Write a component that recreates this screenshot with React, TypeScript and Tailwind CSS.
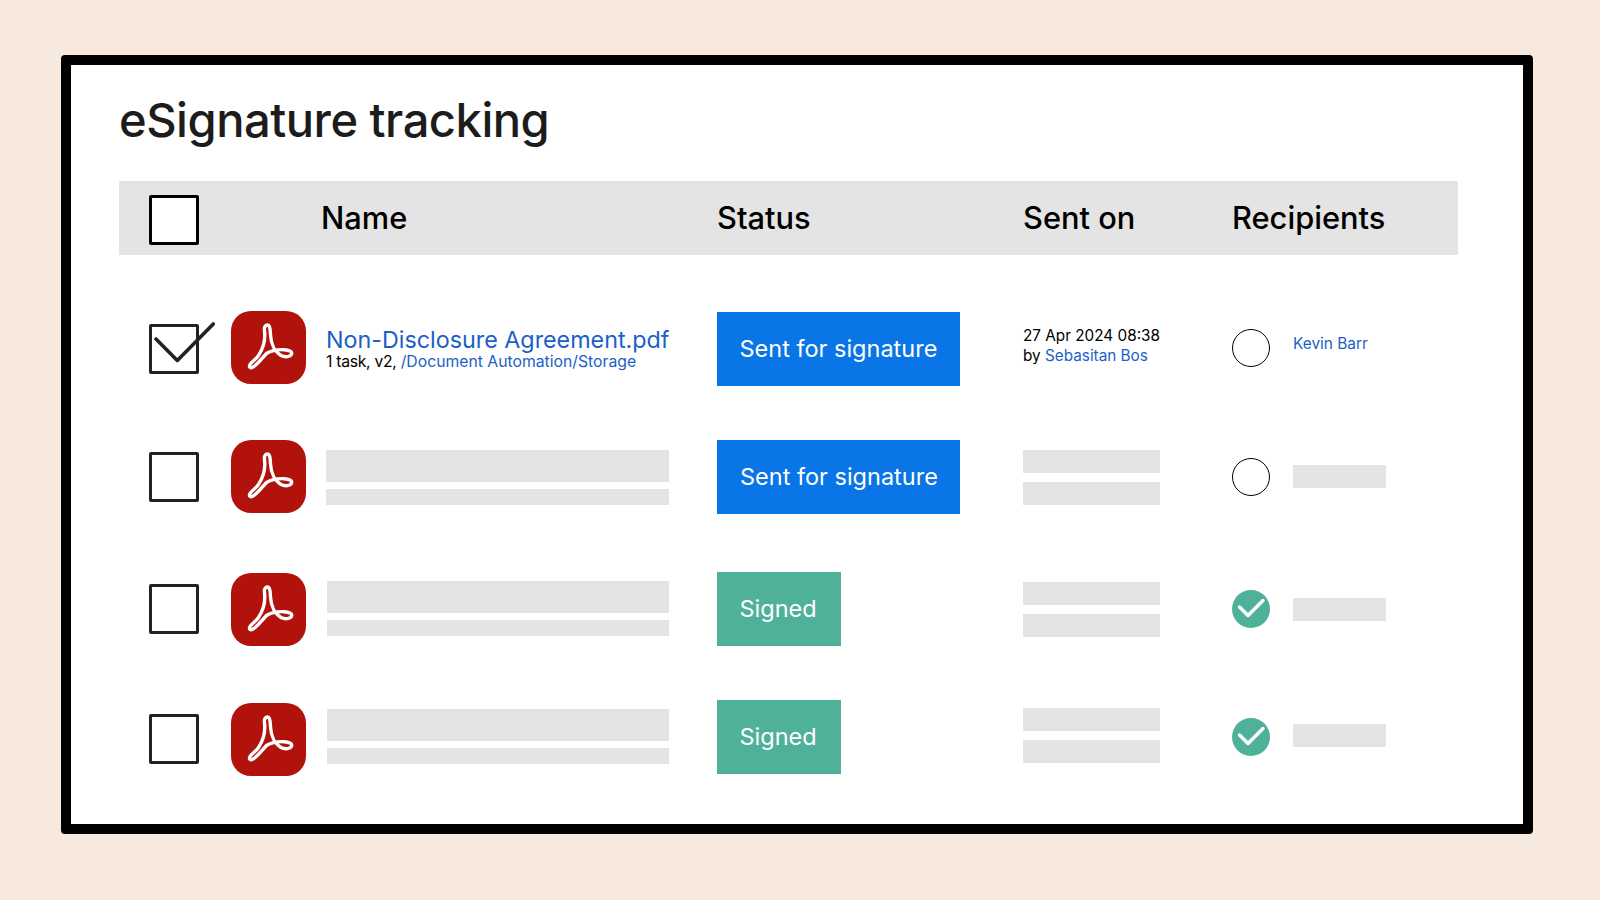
const pageFont = "font-['Inter','Liberation_Sans',sans-serif]";

function Checkbox({ className = "" }: { className?: string }) {
  return (
    <div
      className={`h-[50px] w-[50px] rounded-[2px] border-[3px] border-[#222222] bg-white ${className}`}
    />
  );
}

function CheckedBox() {
  return (
    <div className="relative mt-[2px] h-[50px] w-[50px] rounded-[2px] border-[3px] border-[#222222] bg-white">
      <svg
        className="absolute top-[-17px] left-[-3px] overflow-visible"
        width="70"
        height="70"
        viewBox="0 0 70 70"
        fill="none"
      >
        <path
          d="M7 29 L28.300 50.500 L64.300 14"
          stroke="#222222"
          strokeWidth="3.600"
          strokeLinecap="round"
          strokeLinejoin="round"
        />
      </svg>
    </div>
  );
}

function PdfIcon({ className = "" }: { className?: string }) {
  return (
    <div className={`h-[73px] w-[75px] shrink-0 rounded-[20px] bg-[#b1120b] ${className}`}>
      <svg width="75" height="73" viewBox="0 0 75 73" fill="none">
        <path
          d="M36.300 14C34 14 33 16.500 33.500 20C34.500 28 32.500 37 27.500 44.500C24.500 49 21 50 19 53.500C17.500 56.500 19.500 57.500 22 56C27 53 31 47 35.500 42.500C39.500 40 47 38.500 53 38.700C58 39 61.500 40.500 60.500 43C59.500 46 54 46.500 50 44.500C44 41 40 33 39.500 24C39.300 18 38.800 14 36.300 14Z"
          stroke="white"
          strokeWidth="3.400"
          strokeLinejoin="round"
        />
      </svg>
    </div>
  );
}

function Badge({
  label,
  tone,
  className = "",
}: {
  label: string;
  tone: "sent" | "signed";
  className?: string;
}) {
  return (
    <div
      className={`flex h-[74px] items-center text-[23.5px] text-white ${
        tone === "sent" ? "w-[243px] bg-[#0a75e6]" : "w-[124px] bg-[#4fb19a]"
      } ${className}`}
    >
      {label}
    </div>
  );
}

function EmptyCircle() {
  return <div className="h-[38px] w-[38px] shrink-0 rounded-full border-[1.5px] border-black" />;
}

function DoneCircle() {
  return (
    <div className="h-[38px] w-[38px] shrink-0 rounded-full bg-[#4fb19a]">
      <svg width="38" height="38" viewBox="0 0 38 38" fill="none">
        <path
          d="M7.500 17 L16 25.500 L31 10.500"
          stroke="white"
          strokeWidth="3.400"
          strokeLinecap="round"
          strokeLinejoin="round"
        />
      </svg>
    </div>
  );
}

function Bar({ className }: { className: string }) {
  return <div className={`bg-[#e4e4e4] ${className}`} />;
}

type RowProps = {
  height: string;
  name: React.ReactNode;
  badge: React.ReactNode;
  sent: React.ReactNode;
  recipient: React.ReactNode;
  check?: React.ReactNode;
  iconClass?: string;
};

function Row({ height, name, badge, sent, recipient, check, iconClass }: RowProps) {
  return (
    <div
      className={`grid grid-cols-[82px_95px_391px_306px_209px_1fr] items-center pl-[30px] ${height}`}
    >
      {check ?? <Checkbox />}
      <PdfIcon className={iconClass} />
      {name}
      {badge}
      {sent}
      {recipient}
    </div>
  );
}

function NameBars({ className = "" }: { className?: string }) {
  return (
    <div className={`flex flex-col gap-[7px] ${className}`}>
      <Bar className="h-[32px]" />
      <Bar className="h-[16px]" />
    </div>
  );
}

function SentBars({ className = "" }: { className?: string }) {
  return (
    <div className={`flex w-[137px] flex-col gap-[9px] ${className}`}>
      <Bar className="h-[23px]" />
      <Bar className="h-[23px]" />
    </div>
  );
}

function Recipient({
  icon,
  className = "",
  barClass = "",
}: {
  icon: React.ReactNode;
  className?: string;
  barClass?: string;
}) {
  return (
    <div className={`flex items-center gap-[23px] ${className}`}>
      {icon}
      <Bar className={`h-[23px] w-[93px] ${barClass}`} />
    </div>
  );
}

export default function App() {
  return (
    <div className={`h-[900px] w-[1600px] bg-[#f7e9dd] pt-[55px] pl-[61px] ${pageFont}`}>
      <div className="h-[779px] w-[1472px] rounded-[4px] border-[10px] border-black bg-white pt-[23px] pl-[48px]">
        <h1 className="text-[47.100px] leading-[64px] font-medium tracking-[-0.5px] text-[#1c1c1c]">
          eSignature tracking
        </h1>
        <div className="mt-[29px] w-[1339px]">
          <div className="grid h-[74px] grid-cols-[172px_396px_306px_209px_1fr] items-center bg-[#e4e4e4] pl-[30px] text-[30.8px] font-medium text-black">
            <Checkbox className="mt-[4px] border-black" />
            <span className="mt-[1px]">Name</span>
            <span className="mt-[1px]">Status</span>
            <span className="mt-[1px]">Sent on</span>
            <span className="mt-[1px]">Recipients</span>
          </div>
          <div className="mt-[36px]">
            <Row
              height="h-[113px]"
              check={<CheckedBox />}
              name={
                <div className="mt-[3px] flex flex-col text-[#1c5fc5]">
                  <span className="text-[23.3px] leading-[24px]">Non-Disclosure Agreement.pdf</span>
                  <span className="mt-[1px] text-[15.750px] leading-[18px]">
                    <span className="tracking-[-0.3px] text-black">1 task, v2, </span>
                    /Document Automation/Storage
                  </span>
                </div>
              }
              badge={<Badge label="Sent for signature" tone="sent" className="mt-[2px] pl-[22.500px]" />}
              sent={
                <div className="-mt-[3px] text-[15.300px] leading-[20px] text-black">
                  <div>27 Apr 2024 08:38</div>
                  <div>
                    by <span className="text-[#1c5fc5]">Sebasitan Bos</span>
                  </div>
                </div>
              }
              recipient={
                <div className="flex items-center gap-[23px]">
                  <EmptyCircle />
                  <span className="-mt-[8px] text-[15.400px] text-[#1c5fc5]">Kevin Barr</span>
                </div>
              }
            />
            <Row
              height="h-[145px]"
              name={<NameBars className="mt-[2px] w-[343px]" />}
              badge={<Badge label="Sent for signature" tone="sent" className="pl-[23px]" />}
              sent={<SentBars className="mt-[2px]" />}
              recipient={<Recipient icon={<EmptyCircle />} />}
            />
            <Row
              height="h-[119px]"
              iconClass="mt-[2px]"
              name={<NameBars className="ml-[1px] w-[342px]" />}
              badge={<Badge label="Signed" tone="signed" className="pl-[22.500px]" />}
              sent={<SentBars className="mt-[2px]" />}
              recipient={<Recipient icon={<DoneCircle />} barClass="mt-[2px]" />}
            />
            <Row
              height="h-[138px]"
              check={<Checkbox className="mt-[4px]" />}
              iconClass="mt-[4px]"
              name={<NameBars className="-mt-[2px] ml-[1px] w-[342px]" />}
              badge={<Badge label="Signed" tone="signed" className="pl-[22.500px]" />}
              sent={<SentBars className="-mt-[4px]" />}
              recipient={<Recipient icon={<DoneCircle />} className="-mt-[1px]" barClass="-mt-[3px]" />}
            />
          </div>
        </div>
      </div>
    </div>
  );
}
